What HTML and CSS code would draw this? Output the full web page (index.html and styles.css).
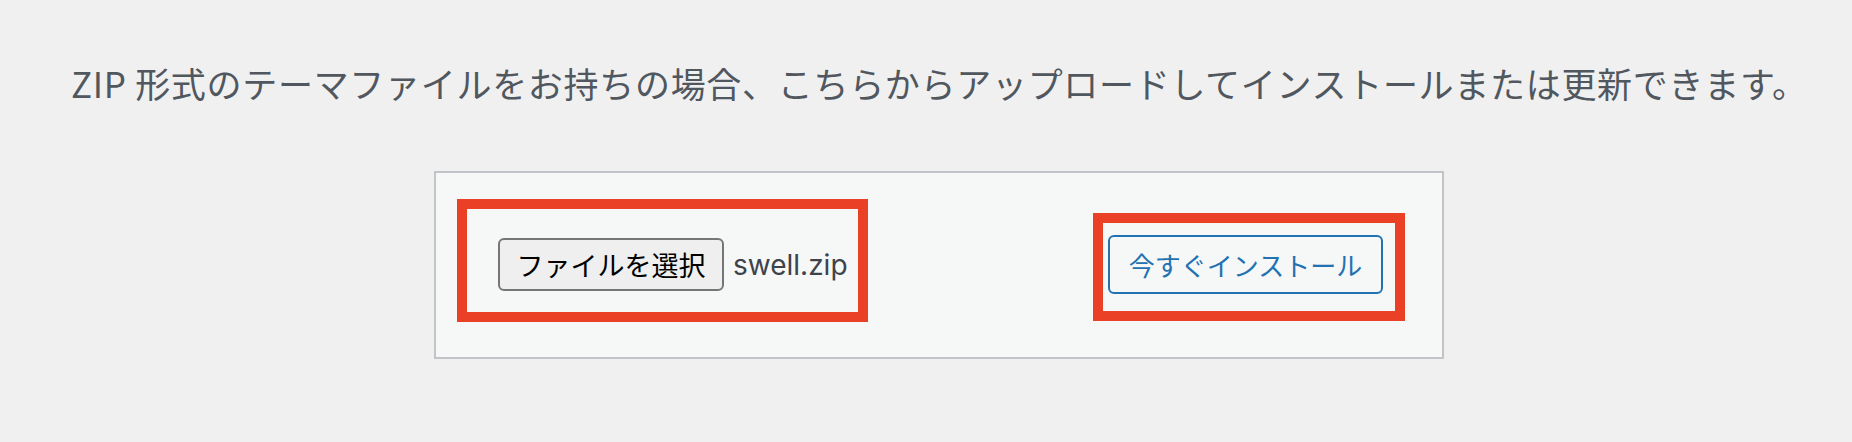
FILE: index.html
```html
<!DOCTYPE html>
<html lang="ja">
<head>
    <meta charset="UTF-8">
    <meta name="viewport" content="width=device-width, initial-scale=1.0">
    <title>テーマのアップロード</title>
    <link rel="stylesheet" href="styles.css">
</head>
<body>

    <div class="upload-theme">
        <p class="install-help">ZIP 形式のテーマファイルをお持ちの場合、こちらからアップロードしてインストールまたは更新できます。</p>

        <form class="upload-form" action="#" onsubmit="return false;">
            <!-- 赤枠: ファイル選択 -->
            <div class="mark mark-file">
                <label class="file-btn" for="themezip">ファイルを選択</label>
                <input type="file" id="themezip" class="file-input">
                <span class="file-name">swell.zip</span>
            </div>

            <!-- 赤枠: インストールボタン -->
            <div class="mark mark-install">
                <button type="submit" class="install-btn">今すぐインストール</button>
            </div>
        </form>
    </div>

</body>
</html>
```

FILE: styles.css
```css
body {
    margin: 0;
    padding: 0;
    background-color: #f0f0f1;
    font-family: "Noto Sans CJK JP", "Noto Sans", sans-serif;
    color: #50575e;
}

.upload-theme {
    display: flex;
    flex-direction: column;
    align-items: flex-start;
}

.install-help {
    margin: 0;
    padding: 65px 0 0 71px;
    font-size: 35px;
    line-height: 35px;
    letter-spacing: 0.7px;
    color: #50575e;
    white-space: nowrap;
}

.upload-form {
    box-sizing: border-box;
    display: flex;
    justify-content: space-between;
    align-items: flex-start;
    width: 1010px;
    height: 188px;
    margin: 71px 0 0 434px;
    padding: 0 37px 0 21px;
    background-color: #f6f7f7;
    border: 2px solid #c3c4c7;
}

.mark {
    box-sizing: border-box;
    display: flex;
    align-items: flex-start;
    border: 10px solid #ea4026;
}

.mark-file {
    width: 411px;
    height: 123px;
    margin-top: 26px;
    padding: 29px 0 20px 31px;
    gap: 9px;
}

.mark-install {
    width: 312px;
    height: 108px;
    margin-top: 40px;
    padding: 12px 0 17px 5px;
}

.file-input {
    display: none;
}

.file-btn {
    box-sizing: border-box;
    display: flex;
    align-items: center;
    justify-content: center;
    width: 226px;
    height: 53px;
    font-size: 27px;
    color: #000;
    background-color: #efefef;
    border: 2px solid #767676;
    border-radius: 6px;
    cursor: pointer;
}

.file-name {
    align-self: center;
    font-family: Inter, "Noto Sans", sans-serif;
    font-size: 28px;
    color: #3c434a;
}

.install-btn {
    box-sizing: border-box;
    width: 275px;
    height: 59px;
    padding: 0;
    font-family: "Noto Sans CJK JP", sans-serif;
    font-size: 26px;
    color: #2271b1;
    background-color: #f6f7f7;
    border: 2px solid #2271b1;
    border-radius: 6px;
    cursor: pointer;
}
```
